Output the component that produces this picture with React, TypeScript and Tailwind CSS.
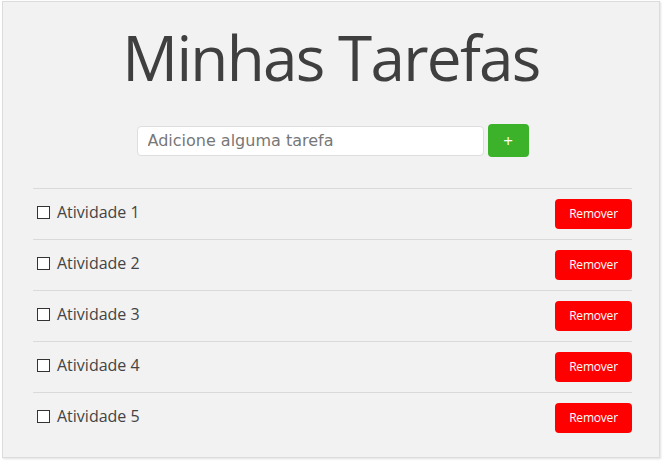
import { useState } from 'react'

const initial = ['Atividade 1', 'Atividade 2', 'Atividade 3', 'Atividade 4', 'Atividade 5']

export default function App() {
  const [tasks, setTasks] = useState(initial)
  const [text, setText] = useState('')

  const add = () => {
    if (!text.trim()) return
    setTasks([...tasks, text.trim()])
    setText('')
  }

  return (
    <div className="bg-white w-[664px] h-[461px] pt-[1px] pl-[2px]">
      <div className="w-[658px] h-[457px] border border-[#dcdcdc] bg-[#f2f2f2] shadow-[1px_1px_2px_rgba(0,0,0,0.12)] font-['Open_Sans',sans-serif] text-[#404040]">
        <h1 className="text-center text-[62px] leading-none tracking-[-1.7px] mt-[24px] text-[#3f3f3f]">
          Minhas Tarefas
        </h1>

        {/* Add task */}
        <div className="flex items-center justify-center gap-[4px] mt-[36px] pl-[3px]">
          <input
            value={text}
            onChange={e => setText(e.target.value)}
            placeholder="Adicione alguma tarefa"
            className="w-[347px] h-[30px] rounded-[4px] border border-[#dedede] bg-white px-[10px] text-[16px] font-['DejaVu_Sans',sans-serif] text-[#333] placeholder:text-[#777] outline-none"
          />
          <button
            onClick={add}
            className="w-[41px] h-[33px] rounded-[4px] bg-[#3cb22b] text-white text-[17px] leading-none"
          >
            +
          </button>
        </div>

        {/* Task list */}
        <ul className="ml-[30px] mr-[27px] mt-[31px]">
          {tasks.map((t, i) => (
            <li
              key={i}
              className="flex items-center justify-between border-t border-[#dadada] h-[51px]"
            >
              <label className="flex items-center gap-[7px] pl-[4px] -mt-[4px] text-[16px] text-[#444]">
                <input
                  type="checkbox"
                  className="appearance-none w-[13px] h-[13px] border border-[#333] bg-white"
                />
                {t}
              </label>
              <button
                onClick={() => setTasks(tasks.filter((_, j) => j !== i))}
                className="w-[77px] h-[30px] rounded-[4px] bg-[#ff0000] text-white text-[12px] tracking-[-0.2px]"
              >
                Remover
              </button>
            </li>
          ))}
        </ul>
      </div>
    </div>
  )
}
